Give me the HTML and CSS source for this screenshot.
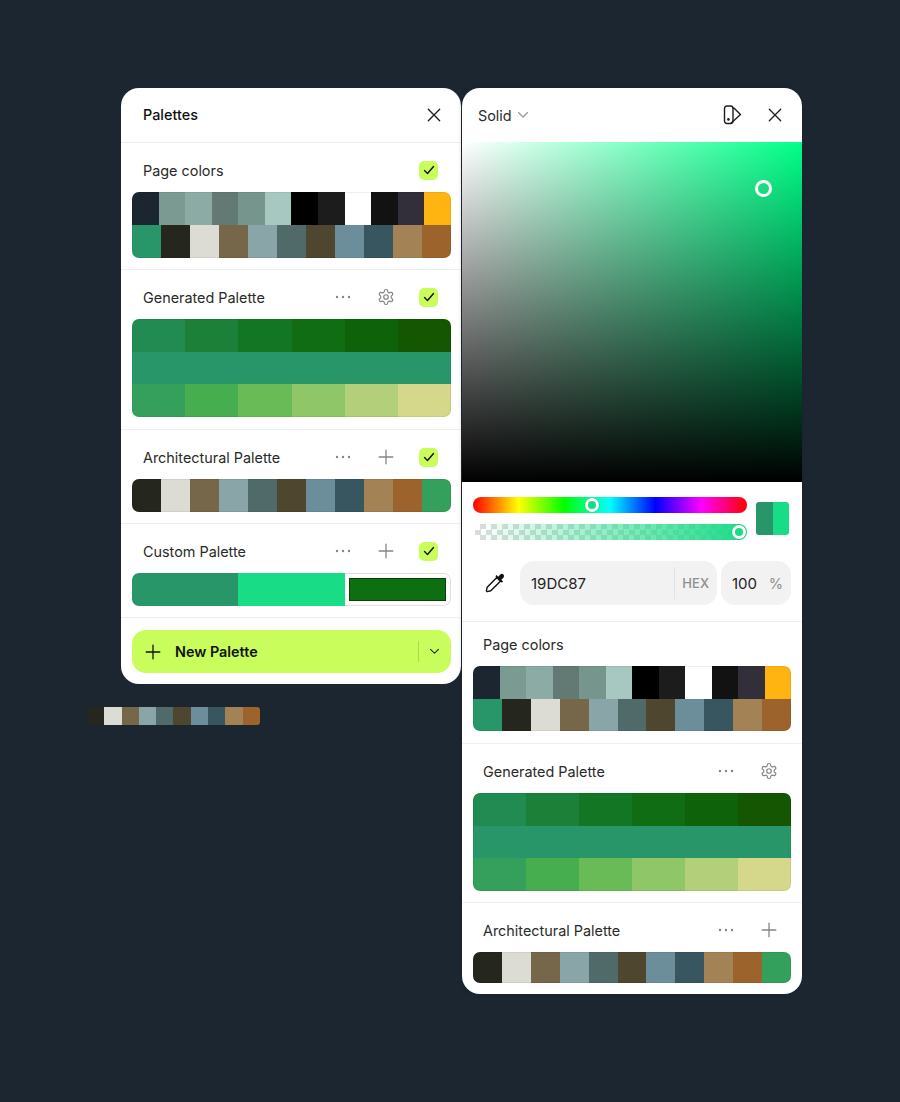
FILE: index.html
```html
<!DOCTYPE html>
<html lang="en">
<head>
<meta charset="utf-8">
<title>Palettes</title>
<link rel="stylesheet" href="styles.css">
</head>
<body>
<svg class="defs" width="0" height="0" aria-hidden="true">
  <symbol id="i-close" viewBox="0 0 16 16"><path d="M1.500 1.500l13 13M14.500 1.500l-13 13" fill="none" stroke="currentColor" stroke-width="1.500" stroke-linecap="round"/></symbol>
  <symbol id="i-plus" viewBox="0 0 16 16"><path d="M8 1.200v13.600M1.200 8h13.600" fill="none" stroke="currentColor" stroke-width="1.300" stroke-linecap="round"/></symbol>
  <symbol id="i-dots" viewBox="0 0 18 18"><circle cx="3" cy="9" r="1.200" fill="currentColor"/><circle cx="9" cy="9" r="1.200" fill="currentColor"/><circle cx="15" cy="9" r="1.200" fill="currentColor"/></symbol>
  <symbol id="i-gear" viewBox="0 0 24 24"><g fill="none" stroke="currentColor" stroke-width="1.600" stroke-linejoin="round"><circle cx="12" cy="12" r="3"/><path d="M12.220 2h-.44a2 2 0 0 0-2 2v.18a2 2 0 0 1-1 1.730l-.43.25a2 2 0 0 1-2 0l-.15-.08a2 2 0 0 0-2.730.73l-.22.38a2 2 0 0 0 .73 2.730l.15.1a2 2 0 0 1 1 1.720v.51a2 2 0 0 1-1 1.740l-.15.09a2 2 0 0 0-.73 2.730l.22.38a2 2 0 0 0 2.730.73l.15-.08a2 2 0 0 1 2 0l.43.25a2 2 0 0 1 1 1.730V20a2 2 0 0 0 2 2h.44a2 2 0 0 0 2-2v-.18a2 2 0 0 1 1-1.730l.43-.25a2 2 0 0 1 2 0l.15.08a2 2 0 0 0 2.730-.73l.22-.39a2 2 0 0 0-.73-2.730l-.15-.08a2 2 0 0 1-1-1.740v-.5a2 2 0 0 1 1-1.740l.15-.09a2 2 0 0 0 .73-2.730l-.22-.38a2 2 0 0 0-2.730-.73l-.15.08a2 2 0 0 1-2 0l-.43-.25a2 2 0 0 1-1-1.730V4a2 2 0 0 0-2-2z"/></g></symbol>
  <symbol id="i-check" viewBox="0 0 12 12"><path d="M1.500 6.500l3 3 6-7" fill="none" stroke="currentColor" stroke-width="1.400" stroke-linecap="round" stroke-linejoin="round"/></symbol>
  <symbol id="i-chev" viewBox="0 0 12 8"><path d="M1.500 1.500L6 6l4.500-4.500" fill="none" stroke="currentColor" stroke-width="1.200" stroke-linecap="round" stroke-linejoin="round"/></symbol>
</svg>

<main class="stage">
  <section class="panel panel-left">
    <header class="head">
      <h1 class="head-title">Palettes</h1>
      <button class="icon-btn close"><svg class="i14"><use href="#i-close"/></svg></button>
    </header>

    <div class="group">
      <div class="group-head">
        <span class="group-name">Page colors</span>
        <span class="check"><svg class="i12"><use href="#i-check"/></svg></span>
      </div>
      <div class="swatches">
        <div class="row">
          <i style="background:#1c2630"></i><i style="background:#7a9a92"></i><i style="background:#8cABA4"></i><i style="background:#637a74"></i><i style="background:#75958d"></i><i style="background:#a6c8c0"></i><i style="background:#000000"></i><i style="background:#1c1c1c"></i><i style="background:#ffffff"></i><i style="background:#121212"></i><i style="background:#322e3a"></i><i style="background:#ffb412"></i>
        </div>
        <div class="row">
          <i style="background:#29966a"></i><i style="background:#25261e"></i><i style="background:#dddcd4"></i><i style="background:#76664a"></i><i style="background:#8aa5a7"></i><i style="background:#506a6a"></i><i style="background:#4f462f"></i><i style="background:#6c8e9a"></i><i style="background:#37565f"></i><i style="background:#a38356"></i><i style="background:#9c642c"></i>
        </div>
      </div>
    </div>

    <div class="group gen">
      <div class="group-head">
        <span class="group-name">Generated Palette</span>
        <span class="tools">
          <span class="slot"><svg class="i18"><use href="#i-dots"/></svg></span>
          <span class="slot"><svg class="i18"><use href="#i-gear"/></svg></span>
        </span>
        <span class="check"><svg class="i12"><use href="#i-check"/></svg></span>
      </div>
      <div class="swatches">
        <div class="row">
          <i style="background:#228b52"></i><i style="background:#1c8039"></i><i style="background:#137624"></i><i style="background:#116d14"></i><i style="background:#0e630a"></i><i style="background:#155603"></i>
        </div>
        <div class="row"><i style="background:#29966a"></i></div>
        <div class="row">
          <i style="background:#35a05c"></i><i style="background:#46ae4e"></i><i style="background:#69bb58"></i><i style="background:#8fc667"></i><i style="background:#b3cf79"></i><i style="background:#d5d78a"></i>
        </div>
      </div>
    </div>

    <div class="group">
      <div class="group-head">
        <span class="group-name">Architectural Palette</span>
        <span class="tools">
          <span class="slot"><svg class="i18"><use href="#i-dots"/></svg></span>
          <span class="slot"><svg class="i16"><use href="#i-plus"/></svg></span>
        </span>
        <span class="check"><svg class="i12"><use href="#i-check"/></svg></span>
      </div>
      <div class="swatches">
        <div class="row">
          <i style="background:#25261e"></i><i style="background:#dddcd4"></i><i style="background:#76664a"></i><i style="background:#8aa5a7"></i><i style="background:#506a6a"></i><i style="background:#4f462f"></i><i style="background:#6c8e9a"></i><i style="background:#37565f"></i><i style="background:#a38356"></i><i style="background:#9c642c"></i><i style="background:#33a05c"></i>
        </div>
      </div>
    </div>

    <div class="group">
      <div class="group-head">
        <span class="group-name">Custom Palette</span>
        <span class="tools">
          <span class="slot"><svg class="i18"><use href="#i-dots"/></svg></span>
          <span class="slot"><svg class="i16"><use href="#i-plus"/></svg></span>
        </span>
        <span class="check"><svg class="i12"><use href="#i-check"/></svg></span>
      </div>
      <div class="swatches custom">
        <div class="row">
          <i style="background:#29966a"></i><i style="background:#19dc87"></i>
          <i class="selected"><b style="background:#0e6e12"></b></i>
        </div>
      </div>
    </div>

    <div class="foot">
      <button class="new-btn">
        <svg class="i16 new-plus"><use href="#i-plus"/></svg>
        <span class="new-label">New Palette</span>
        <span class="new-sep"></span>
        <svg class="new-chev"><use href="#i-chev"/></svg>
      </button>
    </div>
  </section>

  <section class="panel panel-right">
    <header class="head">
      <span class="mode">Solid <svg class="mode-chev"><use href="#i-chev"/></svg></span>
      <svg class="swatch-book" viewBox="0 0 20 20"><g fill="none" stroke="#1c1c1c" stroke-width="1.400" stroke-linejoin="round"><rect x="1.500" y="1" width="8.500" height="17.500" rx="2.400"/><path d="M10 3.200h1.200l6.300 6.300L8 18.200"/></g><circle cx="5.400" cy="14.400" r="1.300" fill="#1c1c1c"/></svg>
      <button class="icon-btn close"><svg class="i14"><use href="#i-close"/></svg></button>
    </header>

    <div class="sv"><span class="sv-handle"></span></div>

    <div class="controls">
      <div class="sliders">
        <div class="slider hue"><span class="knob hue-knob"></span></div>
        <div class="slider alpha"><span class="knob alpha-knob"></span></div>
      </div>
      <div class="compare"><i></i><i></i></div>
    </div>

    <div class="inputs">
      <span class="dropper">
        <svg viewBox="0 0 20 20" width="24" height="24"><path d="M11.500 5.500l3 3-8 8-3 .7-.7-.7.700-3z" fill="none" stroke="#111" stroke-width="1.200" stroke-linejoin="round"/><path d="M10.300 4.300l5.400 5.400 1-1-1.400-1.400 1.700-1.700a1.800 1.800 0 0 0-2.600-2.600l-1.700 1.700-1.400-1.400z" fill="#111"/></svg>
      </span>
      <div class="field hex"><span class="val">19DC87</span><span class="hex-sep"></span><span class="unit">HEX</span></div>
      <div class="field pct"><span class="val">100</span><span class="unit pct-unit">%</span></div>
    </div>

    <div class="group tight">
      <div class="group-head">
        <span class="group-name">Page colors</span>
      </div>
      <div class="swatches">
        <div class="row">
          <i style="background:#1c2630"></i><i style="background:#7a9a92"></i><i style="background:#8cABA4"></i><i style="background:#637a74"></i><i style="background:#75958d"></i><i style="background:#a6c8c0"></i><i style="background:#000000"></i><i style="background:#1c1c1c"></i><i style="background:#ffffff"></i><i style="background:#121212"></i><i style="background:#322e3a"></i><i style="background:#ffb412"></i>
        </div>
        <div class="row">
          <i style="background:#29966a"></i><i style="background:#25261e"></i><i style="background:#dddcd4"></i><i style="background:#76664a"></i><i style="background:#8aa5a7"></i><i style="background:#506a6a"></i><i style="background:#4f462f"></i><i style="background:#6c8e9a"></i><i style="background:#37565f"></i><i style="background:#a38356"></i><i style="background:#9c642c"></i>
        </div>
      </div>
    </div>

    <div class="group gen">
      <div class="group-head">
        <span class="group-name">Generated Palette</span>
        <span class="tools">
          <span class="slot"><svg class="i18"><use href="#i-dots"/></svg></span>
          <span class="slot"><svg class="i18"><use href="#i-gear"/></svg></span>
        </span>
      </div>
      <div class="swatches">
        <div class="row">
          <i style="background:#228b52"></i><i style="background:#1c8039"></i><i style="background:#137624"></i><i style="background:#116d14"></i><i style="background:#0e630a"></i><i style="background:#155603"></i>
        </div>
        <div class="row"><i style="background:#29966a"></i></div>
        <div class="row">
          <i style="background:#35a05c"></i><i style="background:#46ae4e"></i><i style="background:#69bb58"></i><i style="background:#8fc667"></i><i style="background:#b3cf79"></i><i style="background:#d5d78a"></i>
        </div>
      </div>
    </div>

    <div class="group last">
      <div class="group-head">
        <span class="group-name">Architectural Palette</span>
        <span class="tools">
          <span class="slot"><svg class="i18"><use href="#i-dots"/></svg></span>
          <span class="slot"><svg class="i16"><use href="#i-plus"/></svg></span>
        </span>
      </div>
      <div class="swatches">
        <div class="row">
          <i style="background:#25261e"></i><i style="background:#dddcd4"></i><i style="background:#76664a"></i><i style="background:#8aa5a7"></i><i style="background:#506a6a"></i><i style="background:#4f462f"></i><i style="background:#6c8e9a"></i><i style="background:#37565f"></i><i style="background:#a38356"></i><i style="background:#9c642c"></i><i style="background:#33a05c"></i>
        </div>
      </div>
    </div>
  </section>

  <div class="ghost">
    <i style="background:#25261e"></i><i style="background:#dddcd4"></i><i style="background:#76664a"></i><i style="background:#8aa5a7"></i><i style="background:#506a6a"></i><i style="background:#4f462f"></i><i style="background:#6c8e9a"></i><i style="background:#37565f"></i><i style="background:#a38356"></i><i style="background:#9c642c"></i>
  </div>
</main>
</body>
</html>
```
FILE: styles.css
```css
* { box-sizing: border-box; }
html, body { margin: 0; height: 1102px; }
body {
  background: #1c2630;
  font-family: Inter, "Liberation Sans", sans-serif;
  color: #222;
  overflow: hidden;
}
.defs { position: absolute; }
.stage {
  position: relative;
  display: flex;
  align-items: flex-start;
  gap: 1px;
  padding: 88px 0 0 121px;
}
.panel {
  width: 340px;
  background: #fff;
  border-radius: 18px;
  overflow: hidden;
}
.panel-right { box-shadow: -1px 0 4px rgba(0,0,0,.12); }

.head {
  height: 55px;
  display: flex;
  align-items: center;
  padding: 0 20px 1px 22px;
  border-bottom: 1px solid #efefef;
}
.panel-right .head { height: 54px; padding: 0 20px 0 16px; border-bottom: 0; }
.head-title { flex: 1; margin: 0; font-size: 14.400px; font-weight: 500; color: #111; }
.icon-btn { border: 0; background: none; padding: 0; color: #1c1c1c; display: flex; }
.i12 { width: 12px; height: 12px; }
.i14 { width: 14px; height: 14px; }
.i16 { width: 16px; height: 16px; }
.i18 { width: 18px; height: 18px; }

.group {
  padding: 15px 11px 11px;
  border-bottom: 1px solid #efefef;
}
.panel-left .group { padding-right: 10px; }
.group.tight { padding: 10px 11px 12px; }
.group.last { border-bottom: 0; padding-bottom: 11px; }
.panel-left .gen { padding-bottom: 12px; }
.group-head {
  height: 24px;
  display: flex;
  align-items: center;
  padding: 0 13px 0 11px;
  margin-bottom: 10px;
}
.panel-right .group-head { padding: 0 13px 0 10px; }
.group-name { flex: 1; font-size: 14.400px; color: #2a2a2a; }
.tools { display: flex; align-items: center; gap: 25px; color: #858585; margin-right: 24px; }
.panel-right .tools { margin-right: 0; }
.slot { width: 18px; height: 18px; display: flex; align-items: center; justify-content: center; }
.check {
  width: 19px;
  height: 19px;
  border-radius: 5px;
  background: #c8fd5c;
  display: flex;
  align-items: center;
  justify-content: center;
  color: #111;
}

.swatches {
  position: relative;
  border-radius: 7px;
  overflow: hidden;
  display: flex;
  flex-direction: column;
}
.swatches::after {
  content: "";
  position: absolute;
  inset: 0;
  border: 1px solid rgba(0,0,0,.06);
  border-radius: inherit;
  pointer-events: none;
}
.swatches.custom::after { display: none; }
.row { display: flex; height: 33px; }
.row i { flex: 1; display: block; }
.panel-left .gen .row + .row { height: 32px; }
.panel-left .gen .row + .row + .row { height: 33px; }
.tight .row { height: 32.500px; }
.panel-right .gen .row { height: 32.500px; }
.panel-right .gen { padding-bottom: 11.500px; }
.last .row { height: 31px; }
.custom .row i { flex: 0 0 33.333%; }
.custom .selected {
  border: 1px solid #dedede;
  border-left: 0;
  border-radius: 0 7px 7px 0;
  padding: 4px;
  background: #fff;
}
.custom .selected b {
  display: block;
  height: 100%;
  border: 1px solid #0a3f0a;
}

.foot { padding: 12px 10px 11px 11px; }
.new-btn {
  width: 100%;
  height: 43px;
  border: 0;
  border-radius: 14px;
  background: #c8fd5c;
  display: flex;
  align-items: center;
  padding: 0 11px 0 13px;
  color: #111;
  font: 600 14.400px Inter, sans-serif;
}
.new-plus { margin-right: 14px; }
.new-label { flex: 1; text-align: left; }
.new-sep { width: 1px; height: 21px; background: #aed64f; margin-right: 10px; }
.new-chev { width: 11px; height: 7px; }

.mode { flex: 1; font-size: 14.400px; color: #2a2a2a; display: flex; align-items: center; gap: 5px; }
.mode-chev { width: 12px; height: 8px; color: #999; }
.swatch-book { width: 20px; height: 20px; margin-right: 25px; }

.sv {
  position: relative;
  height: 340px;
  background:
    linear-gradient(to bottom, rgba(0,0,0,0), #000),
    linear-gradient(to right, #fff, #00ff88);
}
.sv-handle {
  position: absolute;
  left: 292.500px;
  top: 37.500px;
  width: 17px;
  height: 17px;
  border: 3px solid #fff;
  border-radius: 50%;
}

.controls {
  display: flex;
  align-items: center;
  gap: 9px;
  padding: 15px 0 0 11px;
}
.sliders { width: 274px; display: flex; flex-direction: column; gap: 11px; }
.slider { position: relative; height: 16px; border-radius: 8px; }
.hue {
  background: linear-gradient(to right, #f00 0%, #ff0 16.600%, #0f0 33.300%, #0ff 50%, #00f 66.600%, #f0f 83.300%, #f00 100%);
}
.alpha {
  background:
    linear-gradient(to right, rgba(25,220,135,0), #19dc87),
    repeating-conic-gradient(#dcdcdc 0 25%, #fff 0 50%) 0 0 / 11px 11px;
  margin-left: 2px;
  border-radius: 0 8px 8px 0;
}
.knob {
  position: absolute;
  top: 1px;
  width: 14px;
  height: 14px;
  border: 3px solid #fff;
  border-radius: 50%;
  background: #19dc87;
  box-shadow: 0 0 0 .5px rgba(0,0,0,.15);
}
.hue-knob { left: 112px; }
.alpha-knob { left: 257px; }
.compare {
  width: 33px;
  height: 33px;
  border-radius: 3px;
  overflow: hidden;
  display: flex;
}
.compare i { flex: 1; }
.compare i:first-child { background: #29966a; }
.compare i:last-child { background: #19dc87; }

.inputs {
  display: flex;
  gap: 4px;
  padding: 21px 11px 16px 11px;
  border-bottom: 1px solid #efefef;
}
.dropper { width: 43px; display: flex; align-items: center; justify-content: center; }
.field {
  height: 44px;
  background: #f2f2f2;
  border-radius: 14px;
  display: flex;
  align-items: center;
  font-size: 15px;
  color: #222;
}
.hex { width: 197px; padding: 0 8px 0 11px; }
.hex .val { flex: 1; }
.hex-sep { width: 1px; height: 32px; background: #e2e2e2; margin-right: 7px; }
.unit { font-size: 13px; font-weight: 500; color: #8e8e8e; }
.pct { width: 70px; padding: 0 8px 0 11px; }
.pct .val { flex: 1; }
.pct-unit { font-size: 14.500px; font-weight: 400; }

.ghost {
  position: absolute;
  left: 87px;
  top: 707px;
  width: 173px;
  height: 18px;
  border-radius: 3px;
  overflow: hidden;
  display: flex;
}
.ghost i { flex: 1; }
```
